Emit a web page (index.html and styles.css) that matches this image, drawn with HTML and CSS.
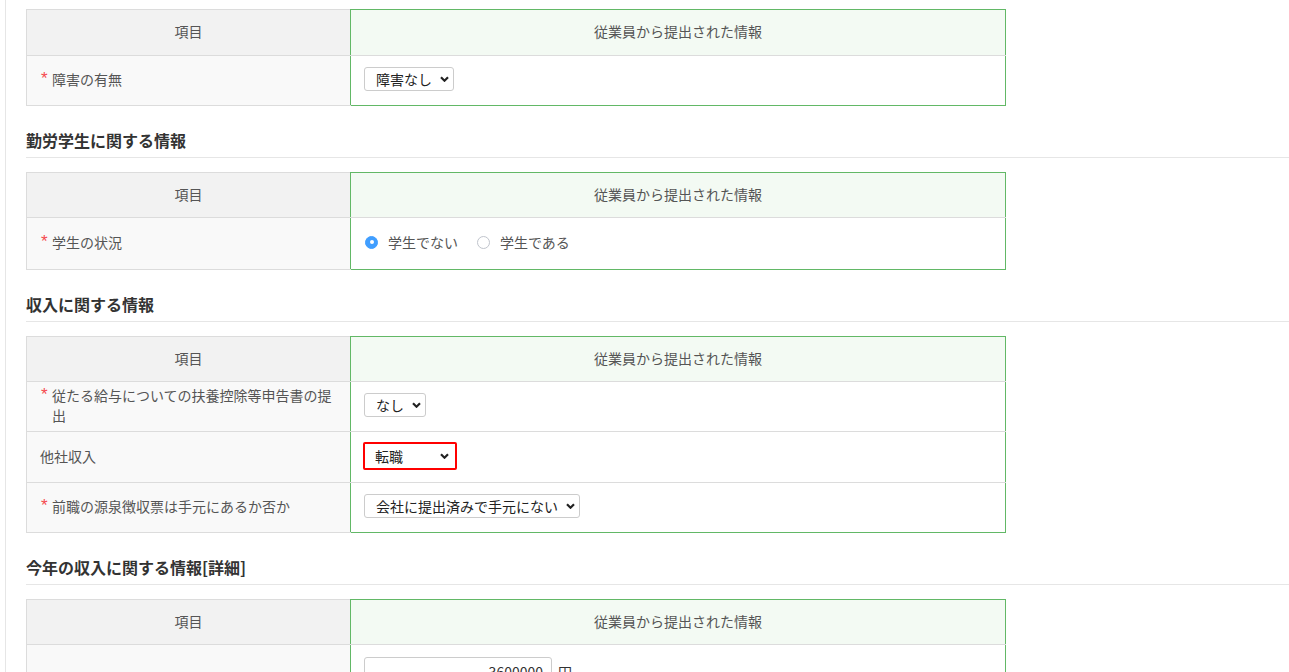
FILE: index.html
```html
<!DOCTYPE html>
<html lang="ja">
<head>
    <meta charset="UTF-8">
    <meta name="viewport" content="width=device-width, initial-scale=1.0">
    <title>扶養控除等申告書</title>
    <link rel="stylesheet" href="styles.css">
</head>
<body>

<div class="page">
    <table class="form-table">
        <colgroup><col class="col-item"><col></colgroup>
        <tr>
            <th class="item">項目</th>
            <th class="info">従業員から提出された情報</th>
        </tr>
        <tr>
            <td class="item"><div class="label"><span class="req">*</span><span>障害の有無</span></div></td>
            <td class="info">
                <span class="select">
                    <select><option>障害なし</option><option>障害あり</option></select>
                    <svg viewBox="0 0 9 6"><path d="M1 1.2 4.5 4.7 8 1.2"/></svg>
                </span>
            </td>
        </tr>
    </table>

    <h3 class="section-title">勤労学生に関する情報</h3>
    <table class="form-table">
        <colgroup><col class="col-item"><col></colgroup>
        <tr>
            <th class="item">項目</th>
            <th class="info">従業員から提出された情報</th>
        </tr>
        <tr class="tall">
            <td class="item"><div class="label"><span class="req">*</span><span>学生の状況</span></div></td>
            <td class="info">
                <div class="radios">
                    <label class="radio checked"><span class="dot"></span>学生でない</label>
                    <label class="radio"><span class="dot"></span>学生である</label>
                </div>
            </td>
        </tr>
    </table>

    <h3 class="section-title">収入に関する情報</h3>
    <table class="form-table">
        <colgroup><col class="col-item"><col></colgroup>
        <tr>
            <th class="item">項目</th>
            <th class="info">従業員から提出された情報</th>
        </tr>
        <tr>
            <td class="item"><div class="label"><span class="req">*</span><span>従たる給与についての扶養控除等申告書の提出</span></div></td>
            <td class="info">
                <span class="select">
                    <select><option>なし</option><option>あり</option></select>
                    <svg viewBox="0 0 9 6"><path d="M1 1.2 4.5 4.7 8 1.2"/></svg>
                </span>
            </td>
        </tr>
        <tr class="marked-row">
            <td class="item"><div class="label"><span>他社収入</span></div></td>
            <td class="info">
                <span class="select marked">
                    <select><option>転職</option><option>なし</option></select>
                    <svg viewBox="0 0 9 6"><path d="M1 1.2 4.5 4.7 8 1.2"/></svg>
                </span>
            </td>
        </tr>
        <tr>
            <td class="item"><div class="label"><span class="req">*</span><span>前職の源泉徴収票は手元にあるか否か</span></div></td>
            <td class="info">
                <span class="select">
                    <select><option>会社に提出済みで手元にない</option><option>手元にある</option></select>
                    <svg viewBox="0 0 9 6"><path d="M1 1.2 4.5 4.7 8 1.2"/></svg>
                </span>
            </td>
        </tr>
    </table>

    <h3 class="section-title">今年の収入に関する情報[詳細]</h3>
    <table class="form-table">
        <colgroup><col class="col-item"><col></colgroup>
        <tr>
            <th class="item">項目</th>
            <th class="info">従業員から提出された情報</th>
        </tr>
        <tr class="amount-row">
            <td class="item"></td>
            <td class="info">
                <div class="amount"><input type="text" value="3600000"><span>円</span></div>
            </td>
        </tr>
    </table>
</div>

</body>
</html>
```

FILE: styles.css
```css
body {
    margin: 0;
    font-family: "Noto Sans CJK JP", "Noto Sans", sans-serif;
    font-size: 14px;
    color: #555;
    background-color: #fff;
}

.page {
    margin-left: 5px;
    border-left: 1px solid #e6e6e6;
    padding: 9px 0 0 20px;
    min-height: 700px;
}

/* table */
.form-table {
    width: 980px;
    border-collapse: collapse;
    table-layout: fixed;
}

.col-item {
    width: 324px;
}

.form-table th,
.form-table td {
    border: 1px solid #dcdcdc;
    line-height: 20px;
}

.form-table th {
    height: 41px;
    padding: 0 0 3px;
    font-weight: normal;
    text-align: center;
    background-color: #f2f2f2;
}

.page > .form-table:first-child th {
    height: 42px;
}

.form-table td {
    height: 46px;
    padding: 0 13px 3px;
    vertical-align: middle;
}

.form-table td.item {
    background-color: #f9f9f9;
}

.form-table .item {
    border-right-color: #62b866;
}

.form-table th.info {
    background-color: #f3faf3;
    border-top-color: #62b866;
}

.form-table .info {
    border-left-color: #62b866;
    border-right-color: #62b866;
}

.form-table tr:last-child .info {
    border-bottom-color: #62b866;
}

.form-table tr.tall td {
    height: 48px;
}

.form-table tr.marked-row td {
    height: 47px;
}

.form-table tr.amount-row td {
    height: 80px;
    vertical-align: top;
    padding-top: 12px;
}

.label {
    display: flex;
}

.req {
    flex: none;
    width: 12px;
    padding-left: 1px;
    box-sizing: border-box;
    font-family: "Liberation Sans", Arial, sans-serif;
    font-size: 17px;
    line-height: 20px;
    color: #f5494f;
}

/* headings */
.section-title {
    margin: 23px 0 14px;
    padding-bottom: 6px;
    border-bottom: 1px solid #e6e6e6;
    font-size: 16px;
    line-height: 22px;
    font-weight: bold;
    color: #333;
}

/* select */
.select {
    position: relative;
    display: inline-block;
    vertical-align: middle;
}

.select select {
    -webkit-appearance: none;
    appearance: none;
    height: 24px;
    padding: 0 21px 0 11px;
    border: 1px solid #ccc;
    border-radius: 3px;
    background-color: #fff;
    font-family: inherit;
    font-size: 14px;
    color: #222;
    display: block;
}

.select svg {
    position: absolute;
    right: 5px;
    top: 9px;
    width: 9px;
    height: 6px;
    fill: none;
    stroke: #222;
    stroke-width: 2.2;
    pointer-events: none;
}

.select.marked {
    margin-left: -1px;
}

.select.marked select {
    width: 94px;
    height: 28px;
    border: 2px solid #f00;
    border-radius: 2px;
    padding-left: 10px;
}

.select.marked svg {
    right: 8px;
    top: 11px;
}

/* radio */
.radios {
    display: flex;
    align-items: center;
    padding-left: 1px;
}

.radio {
    display: inline-flex;
    align-items: center;
    margin-right: 19px;
    color: #555;
    cursor: pointer;
}

.radio .dot {
    position: relative;
    width: 13px;
    height: 13px;
    box-sizing: border-box;
    border: 1px solid #c0c4cc;
    border-radius: 50%;
    margin-right: 10px;
    background-color: #fff;
}

.radio.checked .dot {
    border-color: #409eff;
    background-color: #409eff;
}

.radio.checked .dot::after {
    content: "";
    position: absolute;
    left: 3.5px;
    top: 3.5px;
    width: 4px;
    height: 4px;
    border-radius: 50%;
    background-color: #fff;
}

/* amount */
.amount {
    display: flex;
    align-items: center;
    gap: 6px;
    color: #333;
}

.amount input {
    width: 188px;
    height: 30px;
    box-sizing: border-box;
    border: 1px solid #ccc;
    border-radius: 3px;
    padding: 0 8px;
    text-align: right;
    font-family: inherit;
    font-size: 14px;
    color: #333;
}
```
